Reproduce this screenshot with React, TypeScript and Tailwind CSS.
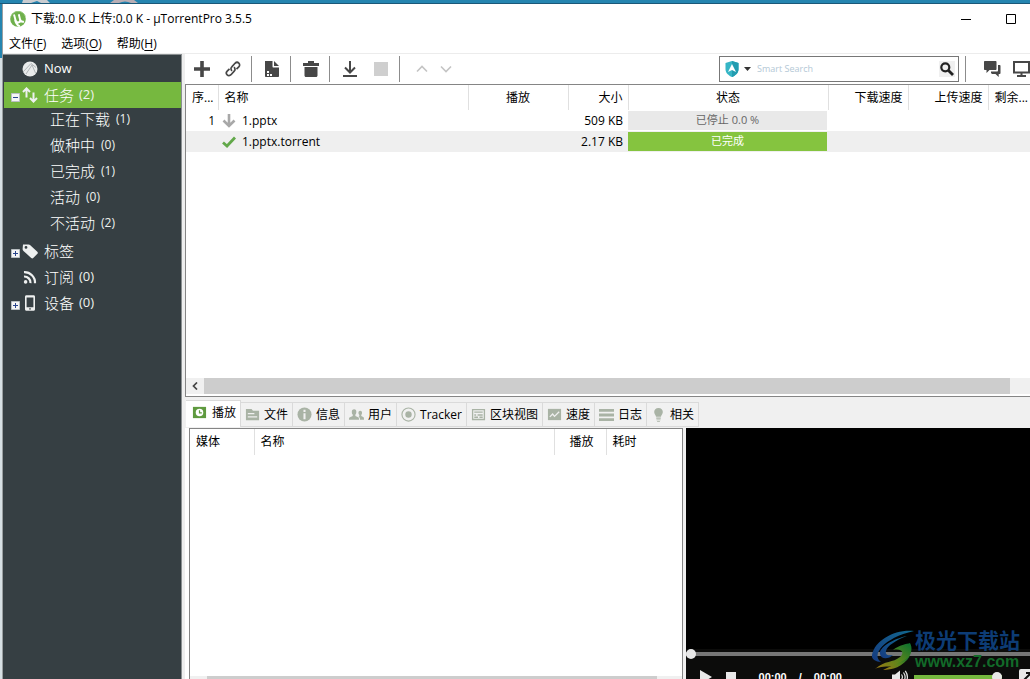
import React from "react";

const FONT = "font-['Open_Sans','Noto_Sans_CJK_SC',sans-serif]";

function Logo() {
  return (
    <svg viewBox="0 0 16 16" className="size-4 shrink-0" aria-hidden="true">
      <circle cx="8" cy="8" r="7.8" fill="#6fb04c" />
      <path d="M1 5.5C2 2.5 5 .3 8 .3c3.4 0 6.3 2 7.3 5" fill="none" stroke="#94c878" strokeWidth="1" />
      <path d="M4 3.6l1.5 5.5c.5 2 1.5 2.7 3 2.4 1.6-.4 1.9-1.500 1.500-3.200L8.800 3.200M10 8.300c.6 2.200 1.700 2.900 4 2.300M5 8.500c.6 3.400 2 5.600 4.800 6.800" fill="none" stroke="#fff" strokeWidth="1.9" />
    </svg>
  );
}

function DesktopStrip() {
  return (
    <div className="flex h-1 shrink-0 border-b border-[#1b5878] bg-[#2585b0] pl-[22px]">
      <svg viewBox="0 0 120 3" className="h-[3px] w-[120px]" aria-hidden="true">
        <path d="M1 0h24l3 3h-9l-4-2-6 2H0z" fill="#c9ccd0" />
        <path d="M92 0h20l4 3h-7q-6-3-12 0h-9z" fill="#b9aeb4" />
      </svg>
    </div>
  );
}

function TitleBar() {
  return (
    <header className="flex h-[29px] shrink-0 items-center pl-[7px] text-[12px]">
      <Logo />
      <h1 className="ml-[5px] whitespace-nowrap">下载:0.0 K 上传:0.0 K - µTorrentPro 3.5.5</h1>
      <div className="flex-1" />
      <button aria-label="最小化" className="flex h-full w-[52px] items-center justify-center">
        <svg viewBox="0 0 10 10" className="size-[10px]"><path d="M0 5.5h10" stroke="#000" /></svg>
      </button>
      <button aria-label="最大化" className="flex h-full w-[38px] items-center justify-center">
        <svg viewBox="0 0 10 10" className="size-[10px]"><path d="M.5.5h9v9h-9z" fill="none" stroke="#000" /></svg>
      </button>
    </header>
  );
}

function MenuBar() {
  const items = [["文件", "F"], ["选项", "O"], ["帮助", "H"]];
  return (
    <nav className="flex h-5 shrink-0 items-center gap-[14px] pl-[5px] pt-0.5 text-[12px]">
      {items.map(([label, key]) => (
        <button key={key} className="whitespace-nowrap pl-px">
          {label}(<span className="underline underline-offset-2">{key}</span>)
        </button>
      ))}
    </nav>
  );
}

function Expander({ open }: { open?: boolean }) {
  return (
    <svg viewBox="0 0 9 9" className="size-[9px] shrink-0" aria-hidden="true">
      <path d="M.5.5h8v8h-8z" fill="#f5f5f5" stroke="#b9bfc2" />
      <path d={open ? "M2 4.5h5" : "M2 4.5h5M4.5 2v5"} stroke="#29458c" />
    </svg>
  );
}

const NowIcon = (
  <svg viewBox="0 0 16 16" className="size-4"><circle cx="8" cy="8" r="7.5" fill="#e9ebeb" /><path d="M1 11L9 2.500l5 4M4 13l6-9 3.500 8" fill="none" stroke="#a9afb1" strokeWidth=".9" /></svg>
);
const TransferIcon = (
  <svg viewBox="0 0 16 16" className="size-4" fill="none" stroke="#eef0f0" strokeWidth="2"><path d="M4.500 10.500V2M1 5l3.500-3.600L8 5M11.500 5.500V14M8 11l3.500 3.600L15 11" /></svg>
);
const TagIcon = (
  <svg viewBox="0 0 16 16" className="size-4"><path fillRule="evenodd" d="M1 1.500h5.500c.8 0 1.300.2 1.800.7l7 6.600c.7.7.7 1.400.1 2l-4.200 4.200c-.6.6-1.300.5-2-.1L1.500 8C.8 7.300.6 6.700.6 6zM4 3a1.400 1.400 0 1 0 .01 2.800A1.400 1.400 0 0 0 4 3z" fill="#eef0f0" /></svg>
);
const RssIcon = (
  <svg viewBox="0 0 16 16" className="size-4" fill="none" stroke="#eef0f0" strokeWidth="2.2"><circle cx="3.6" cy="12.9" r="1.8" fill="#eef0f0" stroke="none" /><path d="M2 7.500a6.200 6.200 0 0 1 6.500 6.700M2 3.200a10.500 10.500 0 0 1 11 11" /></svg>
);
const PhoneIcon = (
  <svg viewBox="0 0 16 16" className="size-4"><path fillRule="evenodd" d="M4.500.3h7c1 0 1.500.6 1.500 1.500v12.400c0 .9-.5 1.500-1.500 1.500h-7c-1 0-1.500-.6-1.500-1.500V1.800C3 .9 3.500.3 4.500.3zM4.600 2.500v9.800h6.800V2.500zM8 13.100a.8.8 0 1 0 .01 1.600.8.8 0 0 0-.01-1.600z" fill="#eef0f0" /></svg>
);

function SideRow({ icon, label, count, expander, active, latin }: {
  icon: React.ReactNode; label: string; count?: number; expander?: "open" | "closed"; active?: boolean; latin?: boolean;
}) {
  return (
    <a href="#" className={`flex h-[26px] items-center pl-[7px] ${active ? "bg-[#76b83f]" : ""}`}>
      <span className="w-[11px] pt-1">{expander && <Expander open={expander === "open"} />}</span>
      <span className="flex w-[22px] shrink-0 justify-start">{icon}</span>
      <span className={latin ? "text-[13px]" : "text-[15px] font-light"}>{label}</span>
      {count !== undefined && <span className="ml-[5px] text-[13px] text-[#eef2ee]">({count})</span>}
    </a>
  );
}

function Sidebar() {
  const subs: [string, number][] = [["正在下载", 1], ["做种中", 0], ["已完成", 1], ["活动", 0], ["不活动", 2]];
  return (
    <aside className="w-[179px] shrink-0 overflow-hidden border-r border-t border-[#8a8f91] bg-[#363f43] pl-px pt-px text-white">
      <SideRow icon={NowIcon} label="Now" latin />
      <SideRow icon={TransferIcon} label="任务" count={2} expander="open" active />
      {subs.map(([label, n]) => (
        <a key={label} href="#" className="flex h-[26px] items-center pb-1 pl-[46px]">
          <span className="text-[15px] font-light">{label}</span>
          <span className="ml-[6px] text-[12px] text-[#eef2ee]">({n})</span>
        </a>
      ))}
      <SideRow icon={TagIcon} label="标签" expander="closed" />
      <SideRow icon={RssIcon} label="订阅" count={0} />
      <SideRow icon={PhoneIcon} label="设备" count={0} expander="closed" />
    </aside>
  );
}

function Tool({ label, children, narrow }: { label: string; children: React.ReactNode; narrow?: boolean }) {
  return (
    <button aria-label={label} className={`flex h-[26px] items-center justify-center ${narrow ? "w-6" : "w-[31px]"}`}>
      <svg viewBox="0 0 16 16" className="size-4" fill="none" stroke="#474747">{children}</svg>
    </button>
  );
}

function Toolbar() {
  const group = "flex border-r border-[#8c8c8c] pl-1 pr-[3px]";
  return (
    <div className="flex h-[30px] shrink-0 items-center">
      <div className="flex border-r border-[#8c8c8c] pl-px pr-[3px]">
        <Tool label="添加种子"><path d="M8 0v16M0 8h16" strokeWidth="3.6" /></Tool>
        <Tool label="添加链接">
          <path d="M7 9.800c-1.300-1.300-1.300-2.900-.2-4L10 2.300c1.200-1.200 2.700-1.300 3.800-.2s1.100 2.700 0 3.800L11.500 8.200M9 6.200c1.300 1.300 1.300 2.900.2 4L6 13.700c-1.200 1.200-2.700 1.300-3.800.2s-1.100-2.700 0-3.800l2.300-2.300" strokeWidth="1.7" />
        </Tool>
      </div>
      <div className={group}>
        <Tool label="制作种子">
          <path d="M1 0h7.500v5.500c0 .6.300 1 1 1H15V15c0 .6-.4 1-1 1H2c-.6 0-1-.4-1-1z" fill="#474747" stroke="none" />
          <path d="M10 0l5 5h-5z" fill="#474747" stroke="none" />
          <path d="M3 10h2v2H3zM3 13h2v2H3zM6 13h2v2H6z" fill="#fff" stroke="none" />
        </Tool>
      </div>
      <div className={group}>
        <Tool label="删除">
          <path d="M5 0h6v2h5v3H0V2h5zM1.500 6h13v8.500c0 .9-.6 1.500-1.500 1.500H3c-.9 0-1.500-.6-1.500-1.500z" fill="#474747" stroke="none" />
        </Tool>
      </div>
      <div className={group}>
        <Tool label="开始"><path d="M8 0v11M3 6.500l5 5 5-5M1 15h14" strokeWidth="2" /></Tool>
        <Tool label="停止"><path d="M1 1h14v14H1z" fill="#cfcfcf" stroke="none" /></Tool>
      </div>
      <div className="flex pl-[10px]">
        <Tool label="上移" narrow><path d="M3 10.500l5-5 5 5" stroke="#c4c4c4" strokeWidth="1.6" /></Tool>
        <Tool label="下移" narrow><path d="M3 5.500l5 5 5-5" stroke="#c4c4c4" strokeWidth="1.6" /></Tool>
      </div>
      <div className="flex-1" />
      <div className="flex h-[26px] w-[240px] shrink-0 items-center border border-[#777] pl-1 pr-[3px]">
        <button aria-label="搜索引擎" className="flex items-center gap-1">
          <svg viewBox="0 0 16 16" className="size-4">
            <path d="M8 0l6.500 2v6c0 4-3 6.500-6.500 8-3.500-1.500-6.500-4-6.500-8V2z" fill="#35b5c5" />
            <path d="M8 0v16c3.500-1.500 6.500-4 6.500-8V2z" fill="#229cb0" />
            <path d="M8 3l4 8-4-2-4 2z" fill="#fff" />
          </svg>
          <svg viewBox="0 0 7 4" className="h-1 w-[7px]"><path d="M0 0h7L3.500 4z" fill="#333" /></svg>
        </button>
        <input aria-label="Smart Search" placeholder="Smart Search" className="ml-[6px] min-w-0 flex-1 text-[9px] outline-none placeholder:text-[#b4c8d6]" />
        <button aria-label="搜索" className="flex size-4 items-center justify-center bg-[#f0f0f0]">
          <svg viewBox="0 0 14 14" className="size-[14px]" fill="none" stroke="#222">
            <circle cx="5.3" cy="5.3" r="4" strokeWidth="2.2" /><path d="M8.500 8.500L13 13" strokeWidth="2.8" />
          </svg>
        </button>
      </div>
      <div className="ml-[6px] h-[26px] w-px shrink-0 bg-[#8c8c8c]" />
      <div className="flex shrink-0 gap-3 pl-[18px]">
        <button aria-label="聊天">
          <svg viewBox="0 0 17 16" className="h-4 w-[17px]" fill="#474747">
            <path d="M1 0h10.500c.6 0 1 .4 1 1v7c0 .6-.4 1-1 1H5.500L2.500 12V9H1C.4 9 0 8.600 0 8V1c0-.6.4-1 1-1z" />
            <path d="M14 4h1.500c.6 0 1 .4 1 1v7c0 .6-.4 1-1 1h-.8v3L11.500 13H8l-1-1v-1.500h6c.6 0 1-.4 1-1z" />
          </svg>
        </button>
        <button aria-label="远程">
          <svg viewBox="0 0 17 16" className="h-4 w-[17px]">
            <path d="M1 1h15v10.500H1z" fill="none" stroke="#474747" strokeWidth="2" />
            <path d="M7.500 12h2v2h3.500v2H4v-2h3.500z" fill="#474747" />
          </svg>
        </button>
      </div>
    </div>
  );
}

function TorrentTable() {
  const th = "h-[25px] border-r border-[#e0e0e0] p-0 font-normal overflow-hidden whitespace-nowrap";
  const td = "h-[21px] p-0 whitespace-nowrap leading-5";
  return (
    <table className="w-full table-fixed border-collapse text-[12px]">
      <colgroup>
        <col className="w-8" /><col className="w-[250px]" /><col className="w-[100px]" /><col className="w-[60px]" />
        <col className="w-[200px]" /><col className="w-[80px]" /><col className="w-[80px]" /><col />
      </colgroup>
      <thead>
        <tr>
          <th className={`${th} pl-[6px] text-left`}>序...</th>
          <th className={`${th} pl-[6px] text-left`}>名称</th>
          <th className={`${th} text-center`}>播放</th>
          <th className={`${th} pr-[5px] text-right`}>大小</th>
          <th className={`${th} text-center`}>状态</th>
          <th className={`${th} pr-[5px] text-right`}>下载速度</th>
          <th className={`${th} pr-[5px] text-right`}>上传速度</th>
          <th className="overflow-hidden whitespace-nowrap p-0 pl-[6px] text-left font-normal">剩余...</th>
        </tr>
      </thead>
      <tbody>
        <tr>
          <td className={`${td} pr-[3px] text-right`}>1</td>
          <td className={`${td} pl-1`}>
            <span className="flex items-center gap-[6px]">
              <svg viewBox="0 0 14 14" className="size-[14px]" fill="none" stroke="#a8a8a8"><path d="M7 0v12M1.500 6.500L7 12l5.500-5.500" strokeWidth="2.6" /></svg>
              1.pptx
            </span>
          </td>
          <td className={td} />
          <td className={`${td} pr-[5px] text-right`}>509 KB</td>
          <td className={`${td} pr-px text-center text-[11px] text-[#666]`}>
            <div className="h-[19px] bg-[#e9e9e9] leading-[18px]">已停止 0.0 %</div>
          </td>
          <td colSpan={3} className={td} />
        </tr>
        <tr className="bg-[#efefef]">
          <td className={td} />
          <td className={`${td} pl-1`}>
            <span className="flex items-center gap-[6px]">
              <svg viewBox="0 0 14 14" className="size-[14px]" fill="none" stroke="#62a84a"><path d="M1 7.500L5 11l8-8.500" strokeWidth="2.8" /></svg>
              1.pptx.torrent
            </span>
          </td>
          <td className={td} />
          <td className={`${td} pr-[5px] text-right`}>2.17 KB</td>
          <td className={`${td} pr-px text-center text-[11px] text-white`}>
            <div className="h-[19px] bg-[#85c43f] leading-[18px]">已完成</div>
          </td>
          <td colSpan={3} className={td} />
        </tr>
      </tbody>
    </table>
  );
}

const G = "#a9b3a5";
const tabs: { label: string; icon: React.ReactNode }[] = [
  { label: "播放", icon: <><path d="M1 2h14v12H1z" fill="#5f9a3f" /><circle cx="8" cy="8" r="4" fill="#fff" /><path d="M8 5.500V8.500h2.500" fill="none" stroke="#5f9a3f" strokeWidth="1.3" /></> },
  { label: "文件", icon: <><path d="M1 2h6l1.500 2H15v10H1z" fill={G} /><path d="M3 7h7M3 10.500h10" stroke="#f0f0f0" strokeWidth="1.3" /></> },
  { label: "信息", icon: <><circle cx="8" cy="8" r="7.5" fill={G} /><path d="M8 3v2.300M8 6.700V13" stroke="#f0f0f0" strokeWidth="2.2" /></> },
  { label: "用户", icon: <path d="M5.500 2.500c1.700 0 2.500 1.300 2.300 3-.1 1.200-.5 1.900-1 2.500v1.500l3 1.500c.7.4.9 1 .9 2.500H0c0-1.600.2-2.100 1-2.500l3-1.500V8c-.6-.6-1-1.300-1-2.500-.2-1.700.8-3 2.500-3zM12 4c1.400 0 2 1 1.900 2.400 0 1-.4 1.500-.8 2v1.300l2 1c.7.4.9.9.9 2.800h-4.300c0-2-.4-2.700-1.400-3.200l.7-.5V8.400c-.5-.5-.9-1-.9-2C10 5 10.600 4 12 4z" fill={G} /> },
  { label: "Tracker", icon: <><circle cx="8" cy="8" r="7" fill="none" stroke={G} strokeWidth="1.2" /><circle cx="8" cy="8" r="3.4" fill={G} /></> },
  { label: "区块视图", icon: <><path d="M1.700 2.700h12.600v10.600H1.700z" fill="none" stroke={G} strokeWidth="1.4" /><path d="M3.500 5.500h9M3.500 8.500h2M7 8.500h5.500M3.500 11h4M9 11h3.500" stroke={G} strokeWidth="1.5" /></> },
  { label: "速度", icon: <><path d="M1 2h14v12H1z" fill={G} /><path d="M3 10.500l3-3 2 2.500L13 5" fill="none" stroke="#f0f0f0" strokeWidth="1.4" /></> },
  { label: "日志", icon: <path d="M0 2h16v3H0zM0 7h16v3H0zM0 12h16v3H0z" fill={G} /> },
  { label: "相关", icon: <path d="M8 1c3 0 4.600 2 4.600 4.300 0 2.200-1.600 3-2 5.200H5.400c-.4-2.200-2-3-2-5.200C3.400 3 5 1 8 1zM5.600 11.300h4.800v1.200H5.600zM5.800 13.200h4.400v1H5.800zM6.500 14.800h3v.9h-3z" fill={G} /> },
];

function Tabs() {
  return (
    <div role="tablist" className="flex h-[28px] shrink-0 items-end pl-px pb-px text-[12px]">
      {tabs.map((t, i) => (
        <button
          key={t.label}
          role="tab"
          aria-selected={i === 0}
          className={`flex items-center whitespace-nowrap border-r border-t border-[#dadada] pr-1 ${
            i === 0 ? "h-[27px] gap-[5px] bg-white pb-[3px] pl-[6px]" : "h-[25px] gap-1 border-b bg-[#f1f1f1] pl-1"
          }`}
        >
          <svg viewBox="0 0 16 16" className="size-[15px]" aria-hidden="true">{t.icon}</svg>
          {t.label}
        </button>
      ))}
    </div>
  );
}

function MediaPanel() {
  const th = "h-[26px] border-r border-[#e0e0e0] p-0 font-normal";
  return (
    <div className="flex min-w-0 bg-[#f0f0f0] pr-[3px]">
      <div className="w-1 shrink-0 bg-white" />
      <div className="flex min-w-0 flex-1 flex-col border-x border-t border-[#858585] bg-white">
        <table className="w-full table-fixed border-collapse text-[12px]">
          <colgroup><col className="w-[64px]" /><col className="w-[300px]" /><col className="w-[52px]" /><col /></colgroup>
          <thead>
            <tr>
              <th className={`${th} pl-[6px] text-left`}>媒体</th>
              <th className={`${th} pl-[6px] text-left`}>名称</th>
              <th className={`${th} pr-3 text-right`}>播放</th>
              <th className="p-0 pl-[6px] text-left font-normal">耗时</th>
            </tr>
          </thead>
        </table>
        <div className="flex-1" />
        <div className="h-[3px] bg-[#f0f0f0] pl-[17px] pr-[25px]"><div className="h-full bg-[#cdcdcd]" /></div>
      </div>
    </div>
  );
}

function Player() {
  const thumb = "appearance-none [&::-webkit-slider-thumb]:size-[10px] [&::-webkit-slider-thumb]:appearance-none [&::-webkit-slider-thumb]:rounded-full [&::-webkit-slider-thumb]:bg-[#e8e8e8]";
  return (
    <div className="relative flex min-w-0 flex-col overflow-hidden bg-black">
      <div className="flex-1" />
      <div className="flex h-[10px] items-center bg-[#0c0c0b]">
        <input type="range" aria-label="播放进度" defaultValue={0} className={`h-1 w-full bg-[#777] ${thumb}`} />
      </div>
      <div className="h-5 overflow-hidden bg-[#0c0c0b]">
        <div className="flex h-9 w-[calc(100%+5px)] items-center pl-[14px] font-['Liberation_Sans',sans-serif] text-[11px] font-bold text-white">
          <button aria-label="播放"><svg viewBox="0 0 12 14" className="h-[14px] w-3"><path d="M0 0l12 7-12 7z" fill="#e8e8e8" /></svg></button>
          <button aria-label="停止" className="ml-[14px]"><svg viewBox="0 0 10 10" className="size-[10px]"><path d="M0 0h10v10H0z" fill="#e8e8e8" /></svg></button>
          <span className="ml-[23px]">00:00</span>
          <span className="ml-3">/</span>
          <span className="ml-3">00:00</span>
          <div className="flex-1" />
          <button aria-label="静音">
            <svg viewBox="0 0 16 14" className="h-[14px] w-4" fill="none" stroke="#e8e8e8">
              <path d="M0 4.500h3L8 .5v13L3 9.500H0z" fill="#e8e8e8" stroke="none" />
              <path d="M9.500 4.500q1.800 2.500 0 5M11.500 2.500q3.200 4.500 0 9M13.300.8q4.200 6.200 0 12.400" strokeWidth="1.2" />
            </svg>
          </button>
          <input type="range" aria-label="音量" defaultValue={100} className={`ml-[6px] h-1 w-[88px] bg-[#76b83f] ${thumb}`} />
          <button aria-label="全屏" className="ml-[17px]">
            <svg viewBox="0 0 16 16" className="size-4"><rect width="16" height="16" rx="2" fill="#e8e8e8" /><path d="M4 12l7-7M7 4h5v5" fill="none" stroke="#111" strokeWidth="2" /></svg>
          </button>
        </div>
      </div>
      <div className="pointer-events-none absolute bottom-[7px] right-[10px] flex items-center">
        <svg viewBox="0 0 44 42" className="h-[42px] w-11" aria-hidden="true">
          <defs>
            <linearGradient id="blueSwoosh" x1="0" y1="1" x2="1" y2="0"><stop offset="0" stopColor="#153a80" /><stop offset="1" stopColor="#12698f" /></linearGradient>
            <linearGradient id="greenSwoosh" x1="0" y1="1" x2="1" y2="0"><stop offset="0" stopColor="#a17a12" /><stop offset=".5" stopColor="#5a851c" /><stop offset="1" stopColor="#08702f" /></linearGradient>
          </defs>
          <path d="M43 2C24 0 4 11 1 26c-1 4 4 7 9 7C0 26 12 9 43 2z" fill="url(#blueSwoosh)" />
          <path d="M36 7C22 10 8 18 9 25c1 6 9 5 13 1-5 1-8 0-7-4 1-5 10-11 21-15z" fill="url(#blueSwoosh)" />
          <path d="M39 14c5 9-3 21-15 23-9 1-15 0-20 3 10-9 18-6 25-12 5-4 2-9-7-7 6-5 14-6 17-7z" fill="url(#greenSwoosh)" />
          <path d="M12 41c9 0 20-3 27-14-7 6-16 8-27 14z" fill="url(#greenSwoosh)" />
        </svg>
        <div>
          <div className="text-[21px] font-bold leading-6 text-[#0d3c75]">极光下载站</div>
          <div className="font-['Liberation_Sans',sans-serif] text-[16px] font-bold leading-5 text-[#126a29]">www.xz7.com</div>
        </div>
      </div>
    </div>
  );
}

export default function App() {
  return (
    <div className={`flex h-screen flex-col overflow-hidden bg-white text-black ${FONT}`}>
      <DesktopStrip />
      <div className="flex min-h-0 flex-1">
        <div className="flex w-0.5 shrink-0 flex-col bg-[#d7e0e4]"><div className="h-[54px] bg-[#2585b0]" /></div>
        <div className="flex min-w-0 flex-1 flex-col border-l border-[#9a9fa1]">
          <TitleBar />
          <MenuBar />
          <div className="flex min-h-0 flex-1 border-t border-[#ececec]">
            <Sidebar />
            <div className="w-[3px] shrink-0 bg-[#eeeeee]" />
            <main className="flex min-w-0 flex-1 flex-col">
              <section className="flex min-h-0 flex-[345] basis-0 flex-col">
                <Toolbar />
                <div className="flex min-h-0 flex-1 flex-col overflow-hidden border-y border-l border-[#858585]">
                  <TorrentTable />
                  <div className="flex-1" />
                  <div className="mb-0.5 flex h-4 shrink-0 bg-[#f0f0f0] pr-5">
                    <button aria-label="向左滚动" className="flex w-[18px] items-center justify-center">
                      <svg viewBox="0 0 8 8" className="size-2"><path d="M6 .5L2.500 4 6 7.500" fill="none" stroke="#444" strokeWidth="1.7" /></svg>
                    </button>
                    <div className="flex-1 bg-[#cdcdcd]" />
                  </div>
                </div>
              </section>
              <section className="flex min-h-0 flex-[280] basis-0 flex-col bg-[#f0f0f0] pt-[3px]">
                <Tabs />
                <div className="grid min-h-0 flex-1 grid-cols-[500fr_344fr]">
                  <MediaPanel />
                  <Player />
                </div>
              </section>
            </main>
          </div>
        </div>
      </div>
    </div>
  );
}
